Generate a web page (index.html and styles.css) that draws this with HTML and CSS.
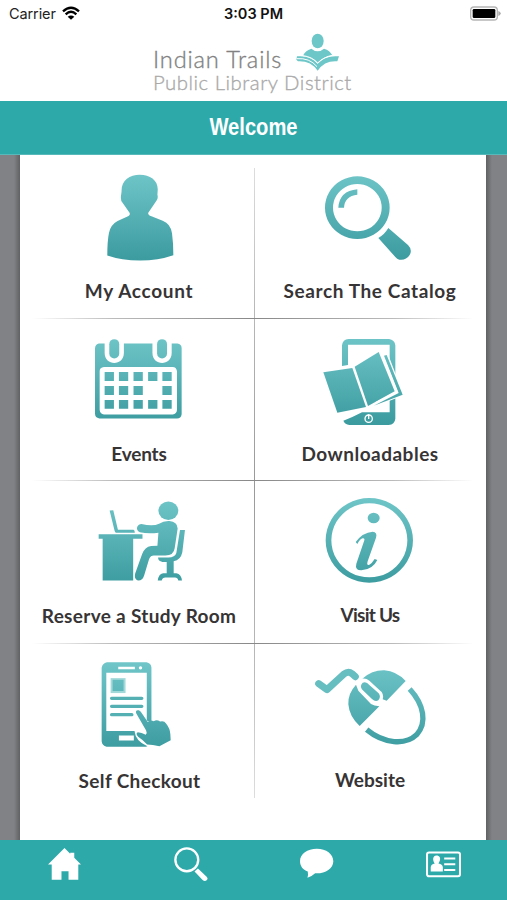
FILE: index.html
```html
<!DOCTYPE html>
<html lang="en">
<head>
<meta charset="utf-8">
<title>Indian Trails Public Library District</title>
<link rel="stylesheet" href="styles.css">
</head>
<body>
<svg class="defs" width="0" height="0" aria-hidden="true">
  <defs>
    <linearGradient id="teal" gradientUnits="userSpaceOnUse" x1="0" y1="50" x2="0" y2="318">
      <stop offset="0" stop-color="#70c6c9"/>
      <stop offset="1" stop-color="#3b9b9f"/>
    </linearGradient>
  </defs>
</svg>
<div class="screen">
  <div class="status">
    <div class="carrier">
      <span>Carrier</span>
      <svg class="wifi" viewBox="0 0 54 42">
        <path d="M27 41L17 32Q27 25 37 32Z"/>
        <path class="arc" d="M3 16Q27-6 51 16M11 25Q27 10 43 25"/>
      </svg>
    </div>
    <span class="time">3:03 PM</span>
    <svg class="battery" viewBox="0 0 93 45">
      <rect class="case" x="2" y="3" width="80" height="39" rx="10"/>
      <rect x="8" y="9" width="68" height="27" rx="4"/>
      <path class="tip" d="M85 15Q92 17 92 22Q92 28 85 30Z"/>
    </svg>
  </div>
  <header class="brand">
    <svg class="logo" viewBox="0 0 690 225">
      <text class="name" x="39" y="128" textLength="385">Indian Trails</text>
      <text class="sub" x="39" y="194" textLength="595">Public Library District</text>
      <g class="reader">
        <ellipse cx="533" cy="48" rx="18" ry="22"/>
        <path d="M514 71Q533 87 552 71Q570 76 577 91Q552 95 533 113Q516 96 489 92Q495 77 514 71Z"/>
        <path d="M471 94Q511 90 533 116Q555 90 597 94L592 109Q554 106 533 137Q512 107 474 109L469 104Z"/>
      </g>
      <path class="page" d="M489 92Q516 95 533 114Q552 95 577 91M470 101Q509 98 531 125"/>
    </svg>
  </header>
  <div class="titlebar"><h1>Welcome</h1></div>
  <main class="stage">
    <div class="panel">
      <a class="tile first">
        <svg class="icon" viewBox="0 30 705 300">
          <path d="M361 59C392 59 416 76 415 104L414 119Q417 129 411 137L386 174Q386 181 396 184L430 197Q454 206 458 235Q462 264 462 301Q416 317 362 317Q306 317 263 302Q263 258 268 234Q273 209 294 198L327 183Q333 180 330 173L309 143Q303 138 304 124L306 109C305 76 330 59 361 59Z"/>
        </svg>
        <span class="label l-account">My Account</span>
      </a>
      <a class="tile right first">
        <svg class="icon" viewBox="0 30 696 300">
          <path fill-rule="evenodd" d="M310 64A97 94 0 1 1 309.900 64ZM310 87A73 71 0 1 0 310.100 87Z"/>
          <path d="M310 103V119Q272 123 270 158H253Q256 108 310 103Z"/>
          <path d="M403 219L462 270Q476 284 467 300Q456 317 436 314Q429 312 424 306L373 249Q392 238 403 219Z"/>
        </svg>
        <span class="label l-search">Search The Catalog</span>
      </a>
      <a class="tile">
        <svg class="icon" viewBox="0 30 705 300">
          <path fill-rule="evenodd" d="M238 76H255V104C255 145 313 145 313 104V76H399V104C399 145 457 145 457 104V76H474Q487 78 487 90V289Q485 302 473 302H239Q226 300 226 288V90Q227 78 238 76ZM253 147Q240 148 240 160V276Q241 289 253 290H460Q472 289 473 276V160Q471 147 460 147Z"/>
          <rect x="269" y="63" width="30" height="58" rx="15"/>
          <rect x="413" y="63" width="30" height="58" rx="15"/>
          <path d="M255 162h28v27h-28zM298 162h28v27h-28zM342 162h28v27h-28zM386 162h28v27h-28zM429 162h28v27h-28zM255 204h28v27h-28zM298 204h28v27h-28zM342 204h28v27h-28zM429 204h28v27h-28zM255 246h28v27h-28zM298 246h28v27h-28zM342 246h28v27h-28zM386 246h28v27h-28zM429 246h28v27h-28z"/>
        </svg>
        <span class="label l-events">Events</span>
      </a>
      <a class="tile right">
        <svg class="icon" viewBox="0 30 696 300">
          <path d="M264 144V82Q266 64 284 63H405Q422 65 424 82V302Q422 320 404 321H286Q273 319 268 308Q298 297 324 283H407V80H282V141Z"/>
          <path class="gap" d="M200 157L298 140L378 93L388 109L402 108L449 232L342 274L244 294Z"/>
          <path d="M208 163L295 150L336 267L250 284Z"/>
          <path d="M302 146L374 102L422 220L342 264Z"/>
          <path d="M390 113L398 111L446 230L359 263L434 225Z"/>
          <path class="gap-line" d="M384 110L429 222L366 254"/>
          <circle class="ring" cx="344" cy="302" r="11"/>
          <path class="ring" d="M344 289V303"/>
        </svg>
        <span class="label l-down">Downloadables</span>
      </a>
      <a class="tile">
        <svg class="icon" viewBox="0 30 705 300">
          <path d="M237 163H369V176H341V302H249V176H237ZM270 91L281 90L295 149H342Q346 150 346 158H289Q286 156 285 152Z"/>
          <ellipse cx="447" cy="92" rx="30" ry="28"/>
          <path d="M366 132Q401 140 419 131Q433 122 450 123Q474 125 475 145L466 205Q463 227 438 227H405Q394 226 389 237L374 287Q369 303 355 302Q343 298 347 281L368 222Q376 201 395 198L414 197L417 158Q388 162 361 157Q350 151 353 141Q357 132 366 132Z"/>
          <path d="M482 150H497L489 217Q484 241 463 244V280H471Q486 283 488 302H477Q475 293 467 293H438Q429 293 427 302H415Q417 283 431 280H442V246H429Q416 244 416 233H447Q467 232 471 219Z"/>
        </svg>
        <span class="label l-room">Reserve a Study Room</span>
      </a>
      <a class="tile right">
        <svg class="icon" viewBox="0 30 696 300">
          <path fill-rule="evenodd" d="M346 54A131 127 0 1 1 345.900 54ZM346 70A114 111 0 1 0 346.100 70Z"/>
          <ellipse cx="359" cy="114" rx="18" ry="16"/>
          <path d="M305 186Q326 157 356 155Q371 156 366 173L341 244Q337 257 345 255Q354 250 362 237L370 240Q356 269 322 271Q302 270 307 251L330 184Q334 174 326 175Q319 176 310 192Z"/>
        </svg>
        <span class="label l-visit">Visit Us</span>
      </a>
      <a class="tile last">
        <svg class="icon" viewBox="0 30 705 300">
          <path fill-rule="evenodd" d="M262 51H381Q395 54 396 67V229Q389 231 382 227V83H260V258H345Q348 289 384 304Q379 306 374 306H261Q247 302 246 289V68Q248 54 262 51ZM296 65V72H346V65ZM363 63A5 5 0 1 0 363.100 63ZM298 272V287H343V272Z"/>
          <rect class="soft" x="273" y="99" width="45" height="45"/>
          <rect x="279" y="104" width="33" height="34"/>
          <path class="bar" d="M276 160H367M276 184H367M276 209H337"/>
          <path d="M350 205Q347 194 358 196Q363 198 366 203L385 231Q393 223 403 229Q412 223 422 230Q434 226 440 236Q452 251 453 268L454 286Q437 295 420 304Q399 300 383 299Q372 287 356 276Q347 266 355 262Q366 262 379 270Q384 265 380 257Z"/>
        </svg>
        <span class="label l-self">Self Checkout</span>
      </a>
      <a class="tile right last">
        <svg class="icon" viewBox="0 30 696 300">
          <path class="cord" d="M194 116L219 134L270 87Q283 77 294 86L304 95"/>
          <path d="M325 101Q355 75 391 76Q428 79 455 108L398 167L386 163Q391 146 377 136L347 108Q336 99 325 101Z"/>
          <path d="M306 119L313 137L351 177Q360 183 376 184L317 243Q286 215 283 178Q281 146 306 119Z"/>
          <path d="M326 113Q337 108 346 120L374 145Q382 156 373 166Q364 172 354 162L325 134Q316 123 326 113Z"/>
          <path class="shell" d="M467 132C510 179 520 233 488 269C455 301 390 297 338 254"/>
        </svg>
        <span class="label l-web">Website</span>
      </a>
    </div>
  </main>
  <nav class="tabs">
    <svg viewBox="0 0 110 110"><path d="M6 61L55 12L72 29V26H84V41L104 61H96V106H67V81H46V106H17V61Z"/></svg>
    <svg viewBox="2 0 110 110"><circle class="lens" cx="46" cy="47" r="34"/><path d="M79 73L105 97Q110 103 105 108Q99 112 93 107L69 82Z"/></svg>
    <svg viewBox="0 0 110 110"><path d="M56 14C84 14 105 30 105 51C105 74 79 89 51 87Q42 96 28 100Q31 91 29 82C14 76 6 65 6 51C6 29 28 14 56 14Z"/></svg>
    <svg viewBox="-2 0 110 110"><rect class="card" x="7" y="25" width="98" height="71" rx="6"/><path d="M35 34C44 34 48 41 45 50L41 58Q53 60 54 69V82H18V69Q19 60 30 58C24 51 22 34 35 34ZM58 40H91V46H58ZM58 57H91V63H58ZM58 74H91V80H58Z"/></svg>
  </nav>
</div>
</body>
</html>
```
FILE: styles.css
```css
* { box-sizing: border-box; }
body { margin: 0; background: #fff; }
.defs { display: block; }
.screen {
  width: 507px;
  height: 900px;
  display: flex;
  flex-direction: column;
  overflow: hidden;
  font-family: Lato, "Open Sans", sans-serif;
}
.status {
  height: 25px;
  padding: 2px 6px 0 9px;
  display: grid;
  grid-template-columns: 1fr auto 1fr;
  align-items: center;
  font: 14.5px/24px Inter, sans-serif;
  color: #222;
}
.carrier { display: flex; align-items: center; gap: 6px; letter-spacing: -0.1px; }
.wifi { width: 18px; height: 14px; margin-top: -2px; }
.arc { fill: none; stroke: #000; stroke-width: 7; }
.time { font-weight: 600; color: #111; margin-right: 3px; }
.battery { width: 31px; height: 15px; justify-self: end; margin-top: -2px; }
.case { fill: #fff; stroke: #b5b5b5; stroke-width: 4; }
.tip { fill: #aaa; }

.brand { height: 76px; }
.logo { display: block; width: 230px; height: 75px; margin-left: 140px; }
.logo text { font-weight: 300; }
.name { font-size: 71px; fill: #818181; stroke: #818181; stroke-width: 1; }
.sub { font-size: 61px; fill: #a9a9a9; stroke: #a9a9a9; stroke-width: 1; }
.reader { fill: #6dc6c7; }
.page { fill: none; stroke: #fff; stroke-width: 3; }

.titlebar {
  height: 54px;
  background: #2ea9aa;
  border-bottom: 1px solid #58b9ba;
  text-align: center;
}
.titlebar h1 {
  margin: 0;
  font: bold 24px/52px "Liberation Sans", sans-serif;
  color: #fff;
  transform: scaleX(0.84);
}

.stage {
  height: 685px;
  padding: 0 21px 0 20px;
  background: linear-gradient(90deg, #808285 0, #808285 14px, #5f6163 20px, #5f6163 486px, #808285 492px);
}
.panel {
  height: 685px;
  display: grid;
  grid-template-columns: 234px 232px;
  grid-template-rows: 164px 162px 163px 163px;
  background:
    linear-gradient(#ddd, #bbb 20%, #999 50%, #bbb 80%, #ddd) 234px 13px / 1px 630px no-repeat,
    #fff;
}
.tile {
  display: flex;
  flex-direction: column;
  align-items: center;
  padding-top: 9px;
  background: linear-gradient(90deg, #fff0 5%, #bbb 40%, #888) 0 100% / 100% 1px no-repeat;
}
.tile.right { background-image: linear-gradient(270deg, #fff0 5%, #bbb 40%, #888); }
.tile.first { padding-top: 10px; }
.tile.last { padding-top: 11px; background: none; }
.icon { display: block; width: 100%; height: 100px; fill: url(#teal); flex: none; }
.gap { fill: #fff; }
.gap-line { fill: none; stroke: #fff; stroke-width: 5; }
.ring { fill: none; stroke: #fff; stroke-width: 4; }
.soft { fill: #a4d9da; }
.bar { fill: none; stroke: #54b0b3; stroke-width: 10; stroke-linecap: round; }
.cord { fill: none; stroke: #66bec1; stroke-width: 21; stroke-linecap: round; stroke-linejoin: round; }
.shell { fill: none; stroke: url(#teal); stroke-width: 16; }
.label {
  margin-top: 14px;
  font-size: 19px;
  line-height: 24px;
  font-weight: 700;
  color: #373435;
  white-space: nowrap;
}
.l-account { letter-spacing: 0.7px; margin-left: 4px; }
.l-search { letter-spacing: 0.6px; }
.l-events { letter-spacing: -0.2px; margin-left: 4px; }
.l-down { letter-spacing: 0.5px; }
.l-room { letter-spacing: 0.32px; margin-left: 4px; }
.l-visit { letter-spacing: -0.75px; margin-top: 13px; }
.l-self { letter-spacing: 0.35px; margin-left: 5px; }
.l-web { margin-top: 13px; }

.tabs { height: 60px; background: #2ea9aa; display: flex; padding: 4px 0 0 46px; }
.tabs svg { width: 37px; height: 37px; margin-right: 89px; fill: #fff; flex: none; }
.lens { fill: none; stroke: #fff; stroke-width: 7; }
.card { fill: none; stroke: #fff; stroke-width: 6; }
```
